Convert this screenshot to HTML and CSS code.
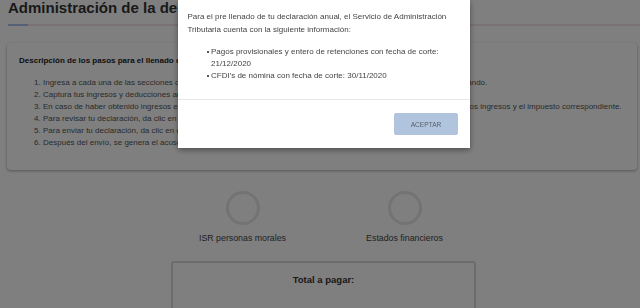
FILE: index.html
```html
<!DOCTYPE html>
<html lang="es">
<head>
  <meta charset="UTF-8">
  <title>Declaración anual</title>
  <link rel="stylesheet" href="styles.css">
</head>
<body>
  <div class="page">
    <h1 class="title">Administración de la declaración anual</h1>
    <div class="rule"><span class="rule-accent"></span></div>

    <div class="card">
      <p class="card-title">Descripción de los pasos para el llenado de tu declaración:</p>
      <ol class="steps">
        <li>Ingresa a cada una de las secciones que se muestran en la parte inferior y revisa toda la información que se va precargando.</li>
        <li>Captura tus ingresos y deducciones autorizadas en cada uno de los apartados.</li>
        <li>En caso de haber obtenido ingresos en el extranjero, selecciona la opción correspondiente y luego captura el monto de los ingresos y el impuesto correspondiente.</li>
        <li>Para revisar tu declaración, da clic en el botón Vista previa.</li>
        <li>Para enviar tu declaración, da clic en el botón Enviar declaración.</li>
        <li>Después del envío, se genera el acuse de recibo de tu declaración.</li>
      </ol>
    </div>

    <div class="summary">
      <div class="sections">
        <div class="section">
          <span class="circle"></span>
          <span class="section-name">ISR personas morales</span>
        </div>
        <div class="section">
          <span class="circle"></span>
          <span class="section-name">Estados financieros</span>
        </div>
      </div>
      <div class="total">Total a pagar:</div>
    </div>
  </div>

  <div class="overlay">
    <div class="modal">
      <div class="modal-body">
        <p>Para el pre llenado de tu declaración anual, el Servicio de Administración Tributaria cuenta con la siguiente información:</p>
        <ul>
          <li>Pagos provisionales y entero de retenciones con fecha de corte: 21/12/2020</li>
          <li>CFDI's de nómina con fecha de corte: 30/11/2020</li>
        </ul>
      </div>
      <div class="modal-footer">
        <button class="btn-accept">ACEPTAR</button>
      </div>
    </div>
  </div>
</body>
</html>
```

FILE: styles.css
```css
body {
  margin: 0;
  font-family: "Liberation Sans", Arial, sans-serif;
  color: #333;
  background: #fff;
  overflow: hidden;
}
.page {
  padding: 0 3px 0 7px;
}
.title {
  margin: -1px 0 0 1px;
  font-size: 15px;
  font-weight: bold;
  line-height: 18px;
  color: #333;
  white-space: nowrap;
}
.rule {
  margin: 7px -3px 0 1px;
  height: 2px;
  background: #f5e4e4;
}
.rule-accent {
  display: block;
  width: 20px;
  height: 2px;
  background: #aac0ea;
}
.card {
  margin-top: 17px;
  padding: 13px 12px 21px;
  background: #fff;
  border-radius: 4px;
  box-shadow: 0 1px 3px rgba(0, 0, 0, 0.35);
  font-size: 8px;
  color: #555;
}
.card-title {
  margin: 0 0 11px;
  font-weight: bold;
  line-height: 10px;
  color: #222;
}
.steps {
  margin: 0;
  padding-left: 24px;
  line-height: 12px;
  white-space: nowrap;
}
.summary {
  padding-left: 3px;
}
.sections {
  display: flex;
  justify-content: center;
  gap: 62px;
  margin-top: 21px;
}
.section {
  display: flex;
  flex-direction: column;
  align-items: center;
  width: 100px;
  font-size: 8.8px;
  line-height: 11px;
  color: #444;
}
.circle {
  width: 34px;
  height: 34px;
  box-sizing: border-box;
  border: 3px solid #e6e6e6;
  border-radius: 50%;
}
.section-name {
  margin-top: 8px;
  white-space: nowrap;
}
.total {
  margin: 17px auto 0;
  width: 305px;
  height: 60px;
  padding-top: 11px;
  box-sizing: border-box;
  border: 2px solid #d9d9d9;
  border-radius: 3px;
  text-align: center;
  font-size: 9.5px;
  font-weight: bold;
  line-height: 12px;
  color: #333;
}
.overlay {
  position: fixed;
  inset: 0;
  background: rgba(0, 0, 0, 0.5);
}
.modal {
  position: absolute;
  top: 0;
  left: 178px;
  width: 292px;
  background: #fff;
  box-shadow: 0 2px 6px rgba(0, 0, 0, 0.4);
  font-size: 8px;
  color: #444;
}
.modal-body {
  padding: 9.5px 10px 17.5px 9.5px;
  border-bottom: 1px solid #e8e8e8;
}
.modal-body p {
  margin: 0;
  line-height: 13px;
}
.modal-body ul {
  margin: 10px 0 0;
  padding-left: 23.5px;
  list-style: none;
  line-height: 12px;
}
.modal-body li {
  position: relative;
}
.modal-body li::before {
  content: "";
  position: absolute;
  left: -4px;
  top: 5px;
  width: 2px;
  height: 2px;
  background: #555;
}
.modal-footer {
  display: flex;
  justify-content: flex-end;
  padding: 13px 12px;
}
.btn-accept {
  width: 64px;
  height: 22px;
  padding: 0;
  border: none;
  border-radius: 2px;
  background: #b0c4de;
  color: #5a5f68;
  font-family: "Liberation Sans", Arial, sans-serif;
  font-size: 6.6px;
}
```
